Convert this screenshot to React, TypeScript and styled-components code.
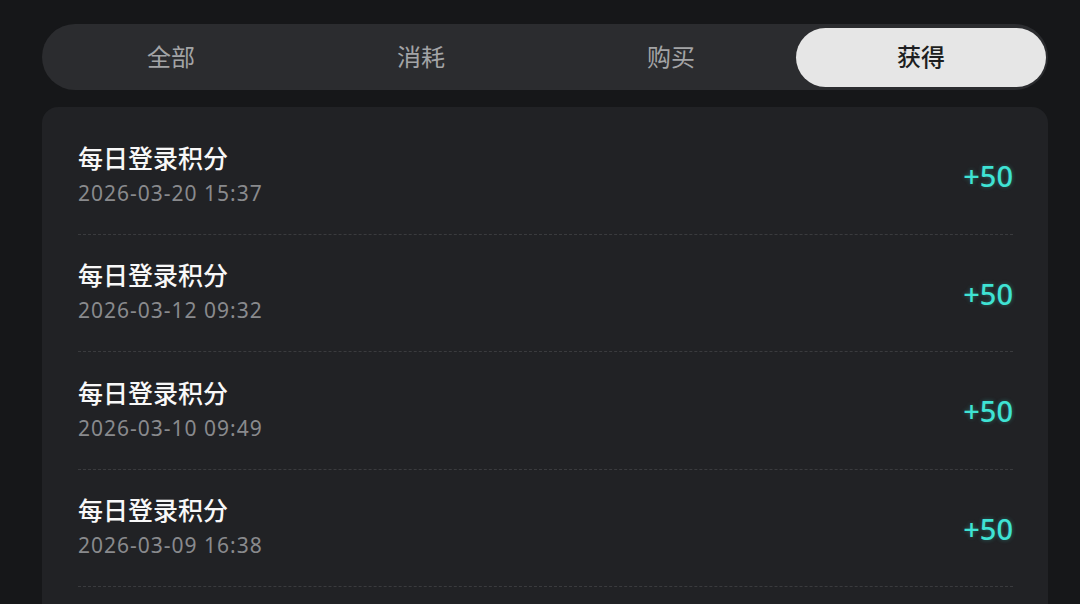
import { useState } from "react";
import styled, { createGlobalStyle } from "styled-components";

const GlobalStyle = createGlobalStyle`
  html, body {
    margin: 0;
    padding: 0;
    background: #161719;
  }
  body {
    font-family: "Noto Sans", "Noto Sans CJK SC", sans-serif;
  }
`;

const tabs = ["全部", "消耗", "购买", "获得"];

const records = [
  { title: "每日登录积分", time: "2026-03-20 15:37", amount: "+50" },
  { title: "每日登录积分", time: "2026-03-12 09:32", amount: "+50" },
  { title: "每日登录积分", time: "2026-03-10 09:49", amount: "+50" },
  { title: "每日登录积分", time: "2026-03-09 16:38", amount: "+50" },
];

const App = () => {
  const [active, setActive] = useState(3);

  return (
    <>
      <GlobalStyle />
      <Page>
        <TabBar>
          {tabs.map((t, i) => (
            <Tab key={t} $active={i === active} onClick={() => setActive(i)}>
              {t}
            </Tab>
          ))}
        </TabBar>
        <Panel>
          {records.map((r, i) => (
            <Row key={i}>
              <Info>
                <Title>{r.title}</Title>
                <Time>{r.time}</Time>
              </Info>
              <Amount>{r.amount}</Amount>
            </Row>
          ))}
        </Panel>
      </Page>
    </>
  );
};

const Page = styled.div`
  height: 604px;
  overflow: hidden;
  padding: 24px 32px 0 42px;
  box-sizing: border-box;
  display: flex;
  flex-direction: column;
  gap: 17px;
`;

const TabBar = styled.div`
  flex-shrink: 0;
  display: grid;
  grid-template-columns: repeat(4, 1fr);
  height: 66px;
  padding: 4px 2px 3px 4px;
  box-sizing: border-box;
  border-radius: 33px;
  background: #2b2c2f;
`;

const Tab = styled.div<{ $active: boolean }>`
  display: flex;
  align-items: center;
  justify-content: center;
  padding-bottom: 5px;
  border-radius: 30px;
  font-family: "Noto Sans CJK SC", sans-serif;
  font-size: 24px;
  font-weight: ${({ $active }) => ($active ? 500 : 400)};
  color: ${({ $active }) => ($active ? "#1e1f21" : "#a3a4a6")};
  background: ${({ $active }) => ($active ? "#e6e6e6" : "transparent")};
  cursor: pointer;
`;

const Panel = styled.div`
  background: #212225;
  border-radius: 16px 16px 0 0;
  padding: 10px 35px 0 36px;
  flex: 1;
`;

const Row = styled.div`
  display: flex;
  align-items: center;
  justify-content: space-between;
  height: 117.5px;
  box-sizing: border-box;
  padding-top: 1px;
  border-bottom: 1px dashed #3a3b3e;
`;

const Info = styled.div`
  display: flex;
  flex-direction: column;
  gap: 6px;
  padding-bottom: 4px;
`;

const Title = styled.div`
  font-family: "Noto Sans CJK SC", sans-serif;
  font-size: 25px;
  font-weight: 500;
  line-height: 32px;
  color: #f8f8f8;
`;

const Time = styled.div`
  font-family: "Noto Sans", "Noto Sans CJK SC", sans-serif;
  font-size: 21px;
  letter-spacing: 1px;
  line-height: 28px;
  color: #898a8d;
`;

const Amount = styled.div`
  font-family: "Noto Sans", sans-serif;
  font-size: 29px;
  font-weight: 500;
  color: #3fe3d4;
  text-shadow: 0 0 4px rgba(63, 227, 212, 0.35);
`;

export default App;
